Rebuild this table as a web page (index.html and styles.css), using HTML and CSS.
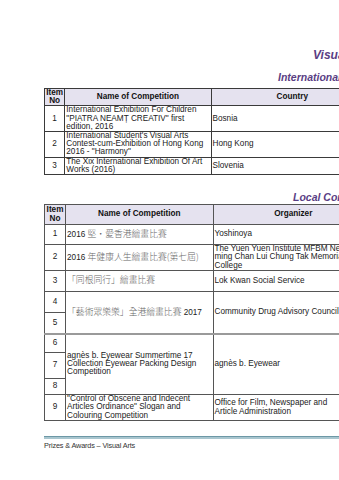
FILE: index.html
```html
<!DOCTYPE html>
<html>
<head>
<meta charset="utf-8">
<link rel="stylesheet" href="styles.css">
</head>
<body>
<div class="page">
  <h1 class="title">Visual Arts</h1>
  <h2 class="sub sub-intl">International Competitions</h2>
  <table class="grid t1">
    <colgroup><col class="c-no"><col class="c-name1"><col class="c-org"></colgroup>
    <tr class="h17"><th class="no">Item<br>No</th><th>Name of Competition</th><th>Country</th></tr>
    <tr class="h24"><td class="no">1</td><td>International Exhibition For Children<br>"PIATRA NEAMȚ CREATIV" first<br>edition, 2016</td><td>Bosnia</td></tr>
    <tr class="h24"><td class="no">2</td><td>International Student's Visual Arts<br>Contest-cum-Exhibition of Hong Kong<br>2016 - "Harmony"</td><td>Hong Kong</td></tr>
    <tr class="h17"><td class="no">3</td><td>The Xix International Exhibition Of Art<br>Works (2016)</td><td>Slovenia</td></tr>
  </table>
  <h2 class="sub sub-local">Local Competitions</h2>
  <table class="grid t2">
    <colgroup><col class="c-no2"><col class="c-name2"><col class="c-org"></colgroup>
    <tr class="r20"><th class="no">Item<br>No</th><th>Name of Competition</th><th>Organizer</th></tr>
    <tr class="r20"><td class="no">1</td><td>2016 <span class="cjk">堅・愛香港繪畫比賽</span></td><td>Yoshinoya</td></tr>
    <tr class="r27"><td class="no">2</td><td>2016 <span class="cjk">年健康人生繪畫比賽(第七屆)</span></td><td>The Yuen Yuen Institute MFBM Nei<br>ming Chan Lui Chung Tak Memorial<br>College</td></tr>
    <tr class="r21"><td class="no">3</td><td><span class="cjk">「同根同行」繪畫比賽</span></td><td>Lok Kwan Social Service</td></tr>
    <tr class="r21"><td class="no">4</td><td rowspan="2"><span class="cjk">「藝術眾樂樂」全港繪畫比賽</span> 2017</td><td rowspan="2">Community Drug Advisory Council</td></tr>
    <tr class="r21"><td class="no">5</td></tr>
    <tr class="r19 sep"><td class="no">6</td><td rowspan="3">agnès b. Eyewear Summertime 17<br>Collection Eyewear Packing Design<br>Competition</td><td rowspan="3">agnès b. Eyewear</td></tr>
    <tr class="r27"><td class="no">7</td></tr>
    <tr class="r16"><td class="no">8</td></tr>
    <tr class="r26"><td class="no">9</td><td>"Control of Obscene and Indecent<br>Articles Ordinance" Slogan and<br>Colouring Competition</td><td>Office for Film, Newspaper and<br>Article Administration</td></tr>
  </table>
  <div class="footer">
    <div class="rule"></div>
    <p class="foot-text">Prizes &amp; Awards – Visual Arts</p>
  </div>
</div>
</body>
</html>
```
FILE: styles.css
```css
html, body {
  margin: 0;
  padding: 0;
  background: #ffffff;
  overflow: hidden;
}
body {
  width: 339px;
  height: 480px;
  font-family: "Liberation Sans", Arial, sans-serif;
  color: #222;
}
.page {
  width: 440px;
  padding-left: 44px;
  box-sizing: border-box;
}
.title {
  margin: 0;
  padding-top: 48px;
  padding-left: 269px;
  font-size: 12px;
  line-height: 14px;
  font-style: italic;
  font-weight: bold;
  color: #5a3e84;
  white-space: nowrap;
}
.sub {
  margin: 0;
  font-size: 10.5px;
  line-height: 12px;
  font-style: italic;
  font-weight: bold;
  color: #5a3e84;
  white-space: nowrap;
}
.sub-intl {
  padding-top: 9px;
  padding-left: 234px;
  height: 17px;
  box-sizing: content-box;
}
.sub-local {
  padding-top: 16px;
  padding-left: 249px;
  height: 13px;
}
.grid {
  border-collapse: collapse;
  table-layout: fixed;
  width: 330px;
  font-size: 8.2px;
  line-height: 8.2px;
}
.grid th, .grid td {
  border: 1px solid #3a3a3a;
  padding: 0 1px;
  vertical-align: middle;
  text-align: left;
  overflow: hidden;
  white-space: nowrap;
}
.grid th {
  background: #e5e2ef;
  font-weight: bold;
  text-align: center;
  color: #111;
}
.grid .no {
  text-align: center;
}
.c-no { width: 20px; }
.c-name1 { width: 144px; }
.c-no2 { width: 21px; }
.c-name2 { width: 147px; }
.c-org { width: 160px; }
.t2 td, .t2 th { border-color: #555; }
.h17 { height: 16px; }
.h24 { height: 24px; }
.r16 { height: 16px; }
.r19 { height: 19px; }
.r20 { height: 20px; }
.r21 { height: 21px; }
.r26 { height: 26px; }
.r27 { height: 26px; }
.sep td { border-top: 2px solid #9a9a9a; }
.cjk {
  font-family: "Noto Sans CJK TC", sans-serif;
  font-size: 8.8px;
  line-height: 8.8px;
  font-weight: 300;
  color: #666;
}
.footer {
  padding-top: 15px;
}
.rule {
  height: 2px;
  background: #a9c6cf;
  border-top: 1px solid #6d98a6;
}
.foot-text {
  margin: 2px 0 0 0;
  font-size: 7.3px;
  line-height: 9px;
  color: #333;
  letter-spacing: -0.15px;
}
```
